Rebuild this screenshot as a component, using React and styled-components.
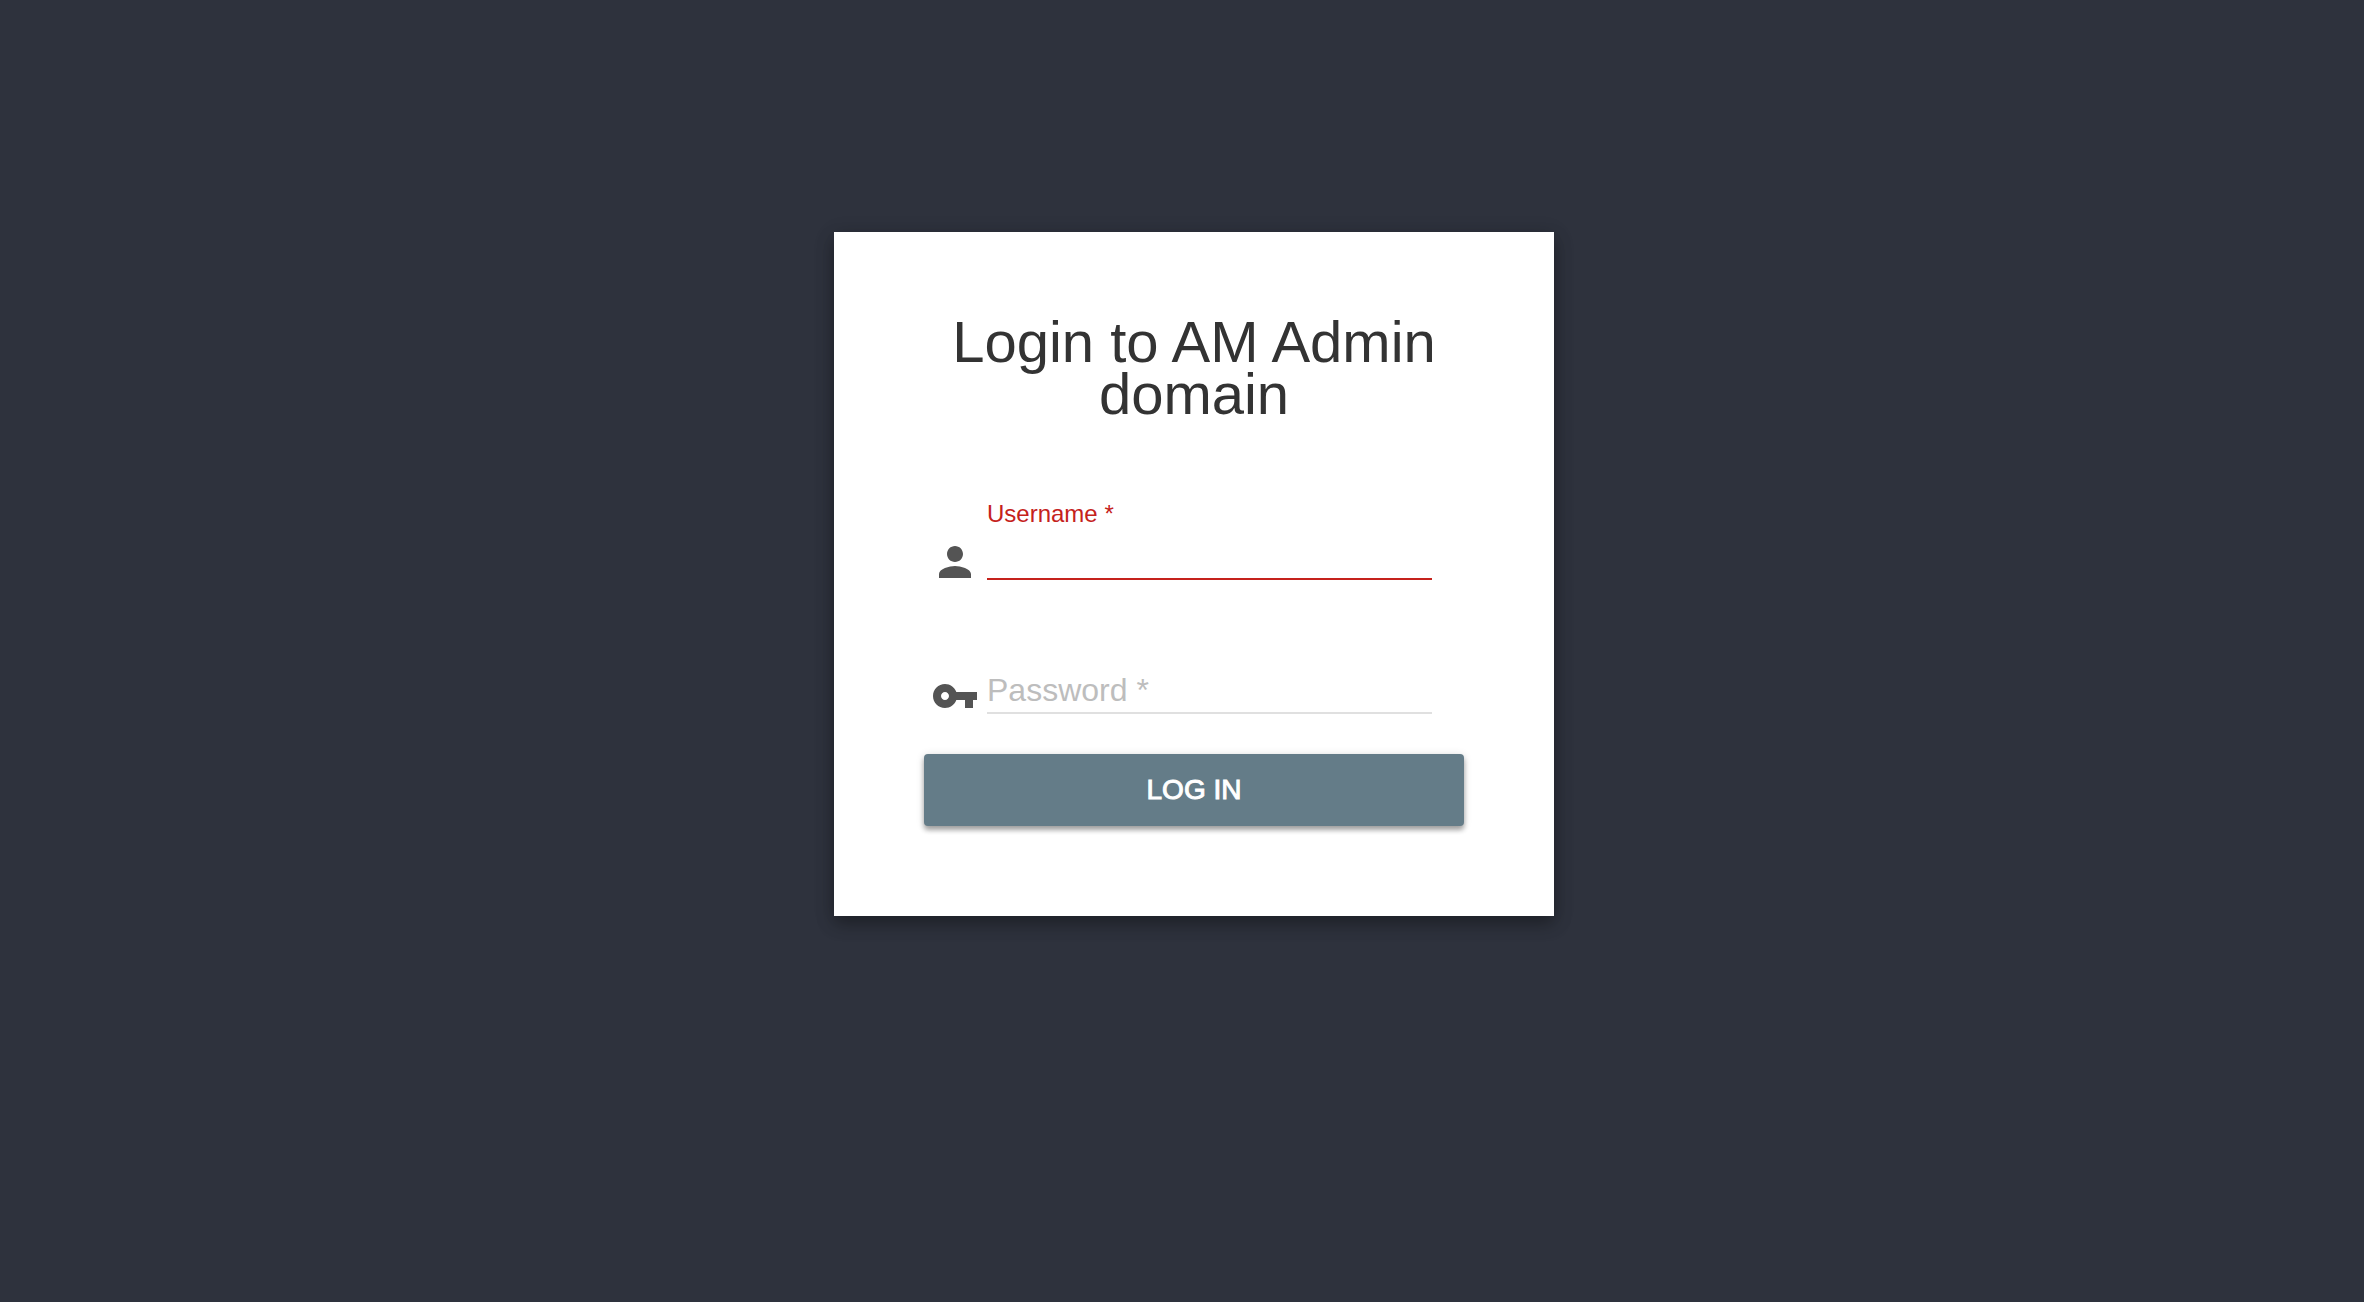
import React, { useState } from 'react';
import styled, { createGlobalStyle } from 'styled-components';

const GlobalStyle = createGlobalStyle`
  *, *::before, *::after { box-sizing: border-box; }
  body {
    margin: 0;
    background: #2e323d;
    font-family: "Liberation Sans", "Helvetica Neue", Arial, sans-serif;
  }
`;

const Page = styled.main`
  display: flex;
  justify-content: center;
  align-items: flex-start;
  min-height: 100vh;
  padding: 232px 0 48px 24px;
  background: #2e323d;
`;

const Card = styled.form`
  width: 100%;
  max-width: 720px;
  padding: 84px 90px 90px;
  background: #fff;
  box-shadow: 0 8px 16px rgba(0, 0, 0, 0.26), 0 4px 20px rgba(0, 0, 0, 0.16);
`;

const Title = styled.h1`
  margin: 0 0 66px;
  color: #333;
  font-size: 58px;
  font-weight: 400;
  line-height: 52px;
  text-align: center;
`;

const Field = styled.div`
  display: flex;
  align-items: flex-end;
  gap: 8px;
  height: 100px;
  margin-bottom: 34px;
  padding: 0 32px 0 7px;
`;

const FieldIcon = styled.svg`
  flex: none;
  width: 48px;
  height: 48px;
  fill: #545454;
`;

const Control = styled.div`
  position: relative;
  flex: 1;
  padding-bottom: 6px;
`;

const Label = styled.label`
  position: absolute;
  left: 0;
  bottom: ${(p) => (p.$raised ? '54px' : '12px')};
  color: ${(p) => (p.$invalid ? '#c5221c' : '#bdbdbd')};
  font-size: ${(p) => (p.$raised ? '24px' : '32px')};
  line-height: 36px;
  white-space: nowrap;
  pointer-events: none;
`;

const Input = styled.input`
  display: block;
  width: 100%;
  height: 56px;
  padding: 4px 0;
  border: 0;
  border-bottom: 2px solid ${(p) => (p.$invalid ? '#c5221c' : '#e0e0e0')};
  border-radius: 0;
  outline: 0;
  background: transparent;
  color: #333;
  font: inherit;
  font-size: 32px;
`;

const SubmitButton = styled.button`
  display: block;
  width: 100%;
  height: 72px;
  padding: 0 16px;
  border: 0;
  border-radius: 4px;
  background: #647c88;
  box-shadow: 0 4px 5px rgba(0, 0, 0, 0.32), 0 1px 8px rgba(0, 0, 0, 0.14);
  color: #fff;
  font-family: inherit;
  font-size: 28px;
  line-height: 72px;
  text-transform: uppercase;
  -webkit-text-stroke: 1px #fff;
  cursor: pointer;
`;

const PERSON =
  'M12 12c2.21 0 4-1.79 4-4s-1.79-4-4-4-4 1.79-4 4 1.79 4 4 4zm0 2c-2.67 0-8 1.34-8 4v2h16v-2c0-2.66-5.33-4-8-4z';
const KEY =
  'M12.65 10C11.83 7.67 9.61 6 7 6c-3.31 0-6 2.69-6 6s2.69 6 6 6c2.61 0 4.83-1.67 5.65-4H17v4h4v-4h2v-4H12.65zM7 14c-1.1 0-2-.9-2-2s.9-2 2-2 2 .9 2 2-.9 2-2 2z';

function TextField({ id, label, type, icon, invalid }) {
  const [value, setValue] = useState('');
  return (
    <Field>
      <FieldIcon viewBox="0 0 24 24" aria-hidden="true">
        <path d={icon} />
      </FieldIcon>
      <Control>
        <Label htmlFor={id} $raised={invalid || value !== ''} $invalid={invalid}>
          {label} *
        </Label>
        <Input
          id={id}
          name={id}
          type={type}
          required
          value={value}
          $invalid={invalid}
          onChange={(e) => setValue(e.target.value)}
        />
      </Control>
    </Field>
  );
}

export default function App() {
  return (
    <>
      <GlobalStyle />
      <Page>
        <Card noValidate onSubmit={(e) => e.preventDefault()}>
          <Title>Login to AM Admin domain</Title>
          <TextField id="username" label="Username" type="text" icon={PERSON} invalid />
          <TextField id="password" label="Password" type="password" icon={KEY} />
          <SubmitButton type="submit">Log in</SubmitButton>
        </Card>
      </Page>
    </>
  );
}
